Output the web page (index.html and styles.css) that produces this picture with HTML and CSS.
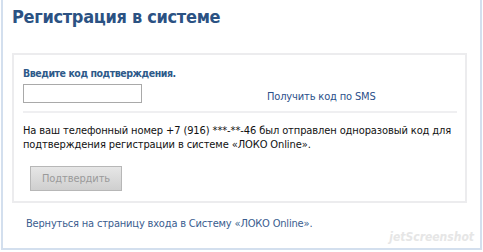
FILE: index.html
```html
<!DOCTYPE html>
<html lang="ru">
<head>
<meta charset="utf-8">
<link rel="stylesheet" href="styles.css">
</head>
<body>
<div class="frame">
  <h1 class="title">Регистрация в системе</h1>
  <div class="box">
    <div class="label">Введите код подтверждения.</div>
    <div class="row">
      <input class="code" type="text">
      <a class="sms" href="#">Получить код по SMS</a>
    </div>
    <div class="sep"></div>
    <p class="info">На ваш телефонный номер +7 (916) ***-**-46 был отправлен одноразовый код для подтверждения регистрации в системе «ЛОКО Online».</p>
    <button class="btn" type="button">Подтвердить</button>
  </div>
  <a class="back" href="#">Вернуться на страницу входа в Систему «ЛОКО Online».</a>
  <div class="wm">jetScreenshot</div>
</div>
</body>
</html>
```
FILE: styles.css
```css
html, body { margin: 0; padding: 0; background: #fff; }
body { font-family: "DejaVu Sans Condensed", "DejaVu Sans", sans-serif; }
.frame {
  position: relative;
  margin-left: 1px;
  width: 481px;
  height: 250px;
  border: 2px solid #d3dfee;
  border-top: none;
  padding: 0 0 0 9px;
  box-sizing: border-box;
}
.title {
  margin: 0;
  padding-top: 5px;
  height: 53px;
  box-sizing: border-box;
  font-size: 18px;
  letter-spacing: -0.3px;
  font-weight: bold;
  color: #2b5283;
  line-height: 24px;
}
.box {
  width: 455px;
  height: 150px;
  box-sizing: border-box;
  border: 2px solid #ececee;
  padding: 11px 0 0 9px;
}
.label {
  font-size: 10.5px;
  letter-spacing: -0.45px;
  font-weight: bold;
  color: #2e5a8a;
  line-height: 14px;
  height: 18px;
}
.row { display: flex; align-items: center; height: 19px; }
.code {
  width: 119px;
  height: 19px;
  box-sizing: border-box;
  border: 1px solid #a9a9a9;
  margin: 0;
  padding: 0;
}
.sms {
  margin-left: 125px;
  font-size: 11px;
  letter-spacing: -0.15px;
  color: #2b4f8a;
  text-decoration: none;
  padding-top: 5px;
}
.sep {
  width: 434px;
  height: 2px;
  background: #efeff1;
  margin-top: 8px;
}
.info {
  margin: 11px 0 0 0;
  font-size: 11px;
  letter-spacing: -0.1px;
  line-height: 14px;
  color: #111;
  width: 440px;
}
.btn {
  margin: 14px 0 0 7px;
  width: 92px;
  height: 25px;
  border: 1px solid #b7b7b7;
  background: linear-gradient(#e6e6e6, #cfcfcf);
  color: #9a9a9a;
  font-family: "DejaVu Sans Condensed", "DejaVu Sans", sans-serif;
  font-size: 11px;
  letter-spacing: -0.1px;
  padding: 0;
}
.back {
  display: block;
  margin: 14px 0 0 14px;
  font-size: 11px;
  letter-spacing: -0.18px;
  color: #3a5d8f;
  text-decoration: none;
}
.wm {
  position: absolute;
  right: 6px;
  bottom: 4px;
  font-size: 12px;
  font-style: italic;
  color: #e6e6e6;
  font-weight: bold;
}
```
